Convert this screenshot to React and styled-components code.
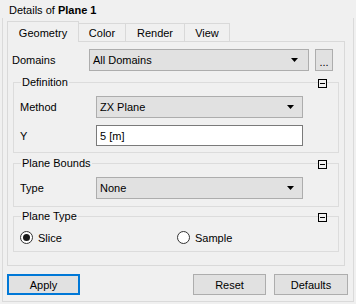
import React from "react";
import styled, { createGlobalStyle, css } from "styled-components";

const Global = createGlobalStyle`
  html, body { margin: 0; padding: 0; background: #f0f0f0; }
  body { font-family: "Liberation Sans", Arial, sans-serif; font-size: 11px; color: #000; }
  #root { width: 356px; height: 304px; overflow: hidden; }
`;

const Page = styled.div`
  width: 356px;
  height: 304px;
  background: #f0f0f0;
`;

const Header = styled.div`
  height: 18px;
  line-height: 18px;
  padding-left: 9px;
  padding-top: 1px;
  box-sizing: border-box;
  b { font-weight: bold; }
`;

const Frame = styled.div`
  margin-left: 2px;
  width: 352px;
  box-sizing: border-box;
  border: 1px solid #dadada;
  border-top: none;
  padding: 3px 5px 6px 4px;
  display: flex;
  flex-direction: column;
`;

const TabBar = styled.div`
  display: flex;
  align-items: flex-end;
  height: 20px;
`;

const Tab = styled.div`
  box-sizing: border-box;
  width: ${(p) => p.$w}px;
  border: 1px solid #d9d9d9;
  border-bottom: none;
  display: flex;
  align-items: center;
  justify-content: center;
  background: #f0f0f0;
  & + & { margin-left: -1px; }
  ${(p) =>
    p.$active
      ? css`
          height: 21px;
          margin-bottom: -1px;
          position: relative;
          z-index: 1;
          padding-top: 1px;
        `
      : css`
          height: 18px;
        `}
`;

const Pane = styled.div`
  box-sizing: border-box;
  width: 338px;
  height: 225px;
  border: 1px solid #d9d9d9;
  background: #f0f0f0;
  padding: 7px 5px 0 4px;
  display: flex;
  flex-direction: column;
`;

const DomainRow = styled.div`
  display: grid;
  grid-template-columns: 77px 220px 24px;
  height: 22px;
  align-items: center;
`;

const Label = styled.span`
  white-space: nowrap;
`;

const ComboBox = styled.div`
  box-sizing: border-box;
  height: 22px;
  border: 1px solid #adadad;
  background: #e1e1e1;
  display: flex;
  align-items: center;
  padding-left: ${(p) => p.$textPad || 3}px;
  padding-right: ${(p) => p.$arrowPad || 8}px;
  justify-content: space-between;
`;

const LineEdit = styled.div`
  box-sizing: border-box;
  height: 21px;
  border: 1px solid #7a7a7a;
  background: #fff;
  display: flex;
  align-items: center;
  padding-left: 3px;
`;

const SmallButton = styled.div`
  box-sizing: border-box;
  height: 22px;
  margin-left: 6px;
  border: 1px solid #adadad;
  background: #e1e1e1;
  display: flex;
  align-items: center;
  justify-content: center;
  padding-top: 3px;
`;

const GroupBox = styled.fieldset`
  position: relative;
  box-sizing: border-box;
  margin: ${(p) => p.$mt}px 0 0 1px;
  width: 326px;
  border: 1px solid #dcdcdc;
  padding: ${(p) => p.$pt}px 0 ${(p) => p.$pb}px 6px;
  min-width: 0;
  display: flex;
  flex-direction: column;
  gap: 7px;
`;

const GroupTitle = styled.span`
  position: absolute;
  top: -7px;
  left: 7px;
  padding: 0 1px;
  background: #f0f0f0;
  line-height: 13px;
`;

const CollapseIcon = styled.svg`
  position: absolute;
  top: -4px;
  right: 11px;
  width: 9px;
  height: 9px;
`;

const FieldRow = styled.div`
  display: grid;
  grid-template-columns: 76px 207px;
  align-items: center;
`;

const RadioRow = styled.div`
  display: grid;
  grid-template-columns: 157px auto;
  align-items: center;
  height: 13px;
`;

const RadioItem = styled.label`
  display: flex;
  align-items: center;
  gap: 5px;
`;

const RadioCircle = styled.span`
  box-sizing: border-box;
  width: 13px;
  height: 13px;
  border-radius: 50%;
  border: 1px solid #333;
  background: #fff;
  display: flex;
  align-items: center;
  justify-content: center;
  &::after {
    content: "";
    width: 7px;
    height: 7px;
    border-radius: 50%;
    background: ${(p) => (p.$checked ? "#1a1a1a" : "transparent")};
  }
`;

const ButtonBar = styled.div`
  display: flex;
  margin-top: 8px;
  height: 21px;
`;

const Button = styled.div`
  box-sizing: border-box;
  width: ${(p) => p.$w}px;
  height: 21px;
  background: #e1e1e1;
  border: ${(p) => (p.$focus ? "2px solid #0078d7" : "1px solid #adadad")};
  display: flex;
  align-items: center;
  justify-content: center;
  margin-left: ${(p) => p.$ml || 0}px;
`;

const Arrow = () => (
  <svg width="7" height="4" viewBox="0 0 7 4">
    <polygon points="0,0 7,0 3.5,4" fill="#000" />
  </svg>
);

const Collapse = () => (
  <CollapseIcon viewBox="0 0 9 9">
    <rect x="0.5" y="0.5" width="8" height="8" fill="#f0f0f0" stroke="#000" />
    <line x1="2" y1="4.5" x2="7" y2="4.5" stroke="#000" />
  </CollapseIcon>
);

const Group = ({ title, mt, pt, pb, children }) => (
  <GroupBox $mt={mt} $pt={pt} $pb={pb}>
    <GroupTitle>{title}</GroupTitle>
    <Collapse />
    {children}
  </GroupBox>
);

const tabs = [
  { label: "Geometry", w: 72, active: true },
  { label: "Color", w: 48 },
  { label: "Render", w: 60 },
  { label: "View", w: 46 },
];

export default function App() {
  return (
    <Page>
      <Global />
      <Header>
        Details of <b>Plane 1</b>
      </Header>
      <Frame>
        <TabBar>
          {tabs.map((t) => (
            <Tab key={t.label} $w={t.w} $active={t.active}>
              {t.label}
            </Tab>
          ))}
        </TabBar>
        <Pane>
          <DomainRow>
            <Label>Domains</Label>
            <ComboBox $arrowPad={10}>
              <span>All Domains</span>
              <Arrow />
            </ComboBox>
            <SmallButton>...</SmallButton>
          </DomainRow>
          <Group title="Definition" mt={11} pt={13} pb={6}>
            <FieldRow>
              <Label>Method</Label>
              <ComboBox>
                <span>ZX Plane</span>
                <Arrow />
              </ComboBox>
            </FieldRow>
            <FieldRow>
              <Label>Y</Label>
              <LineEdit>5 [m]</LineEdit>
            </FieldRow>
          </Group>
          <Group title="Plane Bounds" mt={10} pt={13} pb={7}>
            <FieldRow>
              <Label>Type</Label>
              <ComboBox>
                <span>None</span>
                <Arrow />
              </ComboBox>
            </FieldRow>
          </Group>
          <Group title="Plane Type" mt={9} pt={14} pb={7}>
            <RadioRow>
              <RadioItem>
                <RadioCircle $checked />
                Slice
              </RadioItem>
              <RadioItem>
                <RadioCircle />
                Sample
              </RadioItem>
            </RadioRow>
          </Group>
        </Pane>
        <ButtonBar>
          <Button $w={73} $focus>Apply</Button>
          <Button $w={73} $ml={113}>Reset</Button>
          <Button $w={74} $ml={8}>Defaults</Button>
        </ButtonBar>
      </Frame>
    </Page>
  );
}
